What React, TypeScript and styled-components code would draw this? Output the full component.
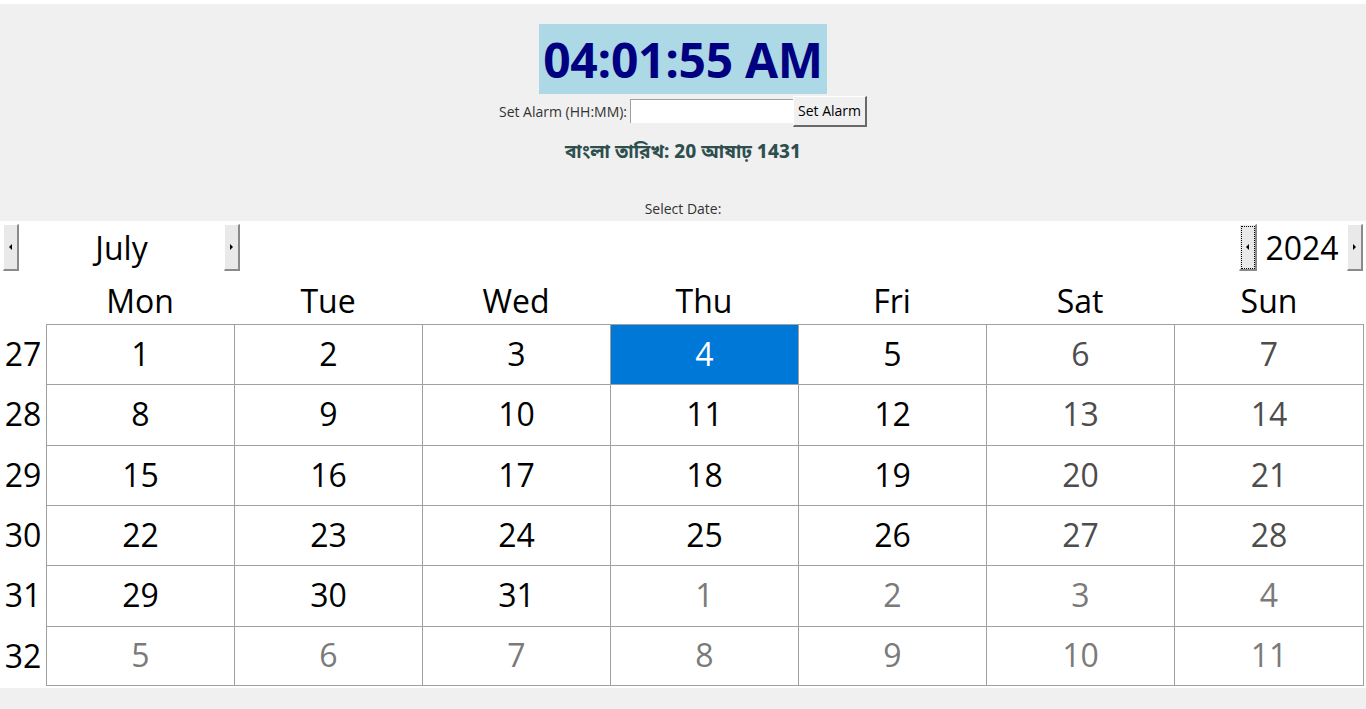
import React from "react";
import styled, { createGlobalStyle } from "styled-components";

const Global = createGlobalStyle`
  html, body { margin: 0; padding: 0; background: #ffffff; }
  body { font-family: "Open Sans", "Noto Sans", sans-serif; }
`;

const Page = styled.div`
  margin-top: 4px;
  background: #f0f0f0;
  min-height: 705px;
  display: flex;
  flex-direction: column;
  align-items: center;
`;

const Clock = styled.div`
  margin-top: 20px;
  width: 288px;
  height: 70px;
  background: #add8e6;
  color: #000080;
  font-family: "Open Sans", sans-serif;
  font-weight: 700;
  font-size: 48px;
  letter-spacing: -0.3px;
  display: flex;
  align-items: center;
  justify-content: center;
`;

const AlarmRow = styled.div`
  display: flex;
  align-items: center;
  height: 32px;
  margin-top: 1px;
`;

const SmallLabel = styled.span`
  font-family: "Open Sans", sans-serif;
  font-size: 14px;
  color: #333333;
`;

const Entry = styled.div`
  width: 162px;
  height: 23px;
  margin-left: 3px;
  background: #fff;
  border-top: 1px solid #a0a0a0;
  border-left: 1px solid #a0a0a0;
`;

const Btn = styled.div`
  width: 74px;
  height: 31px;
  box-sizing: border-box;
  background: #f0f0f0;
  border-top: 1px solid #ffffff;
  border-left: 1px solid #ffffff;
  border-right: 2px solid #696969;
  border-bottom: 2px solid #696969;
  font-family: "Open Sans", sans-serif;
  font-size: 14px;
  color: #000;
  display: flex;
  align-items: center;
  justify-content: center;
`;

const Bangla = styled.div`
  margin-top: 14px;
  font-family: "Noto Sans Bengali", "Noto Sans", "Open Sans", sans-serif;
  font-weight: 700;
  font-size: 19px;
  color: #2f4f4f;
  height: 26px;
  line-height: 26px;
`;

const SelectLabel = styled(SmallLabel)`
  margin-top: 32px;
  height: 20px;
  line-height: 20px;
`;

const Calendar = styled.div`
  align-self: stretch;
  background: #ffffff;
  margin-top: 2px;
  height: 467px;
  display: flex;
  flex-direction: column;
`;

const HeaderBar = styled.div`
  display: flex;
  justify-content: space-between;
  align-items: flex-start;
  padding: 3px 3px 0 3px;
  height: 56px;
`;

const Group = styled.div`
  display: flex;
  align-items: center;
`;

const ArrowBtn = styled.div<{ $focus?: boolean }>`
  width: ${(p) => (p.$focus ? 18 : 16)}px;
  height: 47px;
  box-sizing: border-box;
  background: #e9e9e9;
  border-top: 1px solid #ffffff;
  border-left: 1px solid #ffffff;
  border-right: 2px solid #8a8a8a;
  border-bottom: 2px solid #8a8a8a;
  display: flex;
  align-items: center;
  justify-content: center;
  outline: ${(p) => (p.$focus ? "1px dotted #000" : "none")};
  outline-offset: -3px;
`;

const Tri = styled.span<{ $dir: "l" | "r" }>`
  width: 0;
  height: 0;
  border-top: 3px solid transparent;
  border-bottom: 3px solid transparent;
  ${(p) =>
    p.$dir === "l"
      ? "border-right: 3px solid #000;"
      : "border-left: 3px solid #000;"}
`;

const HeadLabel = styled.div<{ $w: number }>`
  width: ${(p) => p.$w}px;
  text-align: center;
  font-family: "Open Sans", sans-serif;
  font-size: 32px;
  color: #000;
  line-height: 47px;
`;

const Grid = styled.div`
  display: grid;
  grid-template-columns: 46px repeat(6, 188px) 190px;
  grid-template-rows: 44px repeat(6, 60.33px);
  font-family: "Open Sans", sans-serif;
  font-size: 32px;
`;

const DayName = styled.div`
  display: flex;
  align-items: center;
  justify-content: center;
  color: #000;
  padding-bottom: 4px;
`;

const WeekNo = styled.div`
  display: flex;
  align-items: center;
  justify-content: center;
  color: #000;
  padding-bottom: 1px;
`;

type Kind = "normal" | "weekend" | "other" | "selected";

const colors: Record<Kind, string> = {
  normal: "#000000",
  weekend: "#4d4d4d",
  other: "#7a7a7a",
  selected: "#ffffff",
};

const Cell = styled.div<{ $kind: Kind; $last: boolean; $bottom: boolean }>`
  display: flex;
  align-items: center;
  justify-content: center;
  box-sizing: border-box;
  padding-bottom: 2px;
  color: ${(p) => colors[p.$kind]};
  background: ${(p) => (p.$kind === "selected" ? "#0078d7" : "#ffffff")};
  border-left: 1px solid #a0a0a0;
  border-top: 1px solid #a0a0a0;
  border-right: ${(p) => (p.$last ? "1px solid #a0a0a0" : "none")};
  border-bottom: ${(p) => (p.$bottom ? "1px solid #a0a0a0" : "none")};
`;

const days = ["Mon", "Tue", "Wed", "Thu", "Fri", "Sat", "Sun"];

function buildWeeks() {
  const weeks: { no: number; cells: { d: number; kind: Kind }[] }[] = [];
  let d = 1;
  let nextMonth = false;
  for (let w = 0; w < 6; w++) {
    const cells: { d: number; kind: Kind }[] = [];
    for (let c = 0; c < 7; c++) {
      let kind: Kind;
      if (nextMonth) kind = "other";
      else if (d === 4) kind = "selected";
      else if (c >= 5) kind = "weekend";
      else kind = "normal";
      cells.push({ d, kind });
      d++;
      if (!nextMonth && d > 31) {
        d = 1;
        nextMonth = true;
      }
    }
    weeks.push({ no: 27 + w, cells });
  }
  return weeks;
}

export default function App() {
  const weeks = buildWeeks();
  return (
    <>
      <Global />
      <Page>
        <Clock>04:01:55 AM</Clock>
        <AlarmRow>
          <SmallLabel>Set Alarm (HH:MM):</SmallLabel>
          <Entry />
          <Btn>Set Alarm</Btn>
        </AlarmRow>
        <Bangla>বাংলা তারিখ: 20 আষাঢ় 1431</Bangla>
        <SelectLabel>Select Date:</SelectLabel>
        <Calendar>
          <HeaderBar>
            <Group>
              <ArrowBtn>
                <Tri $dir="l" />
              </ArrowBtn>
              <HeadLabel $w={205}>July</HeadLabel>
              <ArrowBtn>
                <Tri $dir="r" />
              </ArrowBtn>
            </Group>
            <Group>
              <ArrowBtn $focus>
                <Tri $dir="l" />
              </ArrowBtn>
              <HeadLabel $w={90}>2024</HeadLabel>
              <ArrowBtn>
                <Tri $dir="r" />
              </ArrowBtn>
            </Group>
          </HeaderBar>
          <Grid>
            <div />
            {days.map((n) => (
              <DayName key={n}>{n}</DayName>
            ))}
            {weeks.map((w, wi) => (
              <React.Fragment key={w.no}>
                <WeekNo>{w.no}</WeekNo>
                {w.cells.map((c, ci) => (
                  <Cell
                    key={ci}
                    $kind={c.kind}
                    $last={ci === 6}
                    $bottom={wi === 5}
                  >
                    {c.d}
                  </Cell>
                ))}
              </React.Fragment>
            ))}
          </Grid>
        </Calendar>
      </Page>
    </>
  );
}
